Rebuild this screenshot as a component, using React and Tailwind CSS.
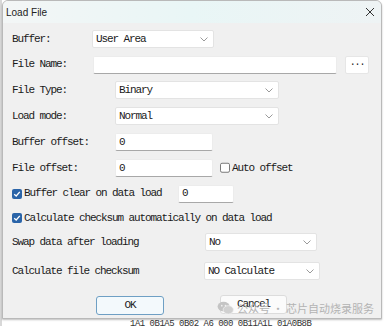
import React from 'react';

const mono = { fontFamily: '"Liberation Mono", "Noto Sans CJK SC", monospace' };

function Chevron() {
	return (
		<svg width="8" height="5" viewBox="0 0 8 5" className="shrink-0">
			<polyline points="0.5,0.5 4,4 7.5,0.5" fill="none" stroke="#9a9a9a" strokeWidth="1" />
		</svg>
	);
}

function Select({ left, width, value }) {
	return (
		<div
			className="absolute top-1/2 -translate-y-1/2 h-[18px] bg-white border border-[#e3e3e3] rounded-[2px] flex items-center justify-between pl-[3px] pr-[5px] text-[11px] tracking-[-1.1px] text-[#1a1a1a]"
			style={{ left, width }}
		>
			<span>{value}</span>
			<Chevron />
		</div>
	);
}

function Input({ left, width, value }) {
	return (
		<div
			className="absolute top-1/2 -translate-y-1/2 h-[18px] bg-white border border-[#ececec] border-b-[#a8a8a8] rounded-[2px] flex items-center pl-[3px] text-[11px] tracking-[-1.1px] text-[#1a1a1a]"
			style={{ left, width }}
		>
			{value}
		</div>
	);
}

function Check({ on }) {
	return on ? (
		<span className="inline-flex w-[10px] h-[10px] rounded-[2px] bg-[#2a64a8] items-center justify-center shrink-0">
			<svg width="8" height="8" viewBox="0 0 8 8">
				<polyline points="1.2,4.2 3.2,6 6.8,1.8" fill="none" stroke="#fff" strokeWidth="1.3" />
			</svg>
		</span>
	) : (
		<span className="inline-block w-[10px] h-[10px] rounded-[2px] border border-[#7a7a7a] bg-white shrink-0" />
	);
}

function Row({ h, children }) {
	return <div className="relative flex items-center pl-[9px]" style={{ height: h }}>{children}</div>;
}

export default function App() {
	return (
		<div className="relative w-[385px] h-[326px] bg-white overflow-hidden" style={mono}>
			{/* background strip at bottom */}
			<div className="absolute left-[130px] top-[319px] text-[9px] leading-[10px] text-[#333] whitespace-nowrap tracking-[-0.5px]">
				1A1 0B1A5 0B02   A6  000 0B11A1L  01A0B8B
			</div>
			<div className="absolute left-0 top-0 w-[2px] h-[326px] bg-[#d8d8d8]" />

			<div className="absolute left-[2px] top-0 w-[380px] h-[319px] border border-[#b9b9b9] rounded-t-[6px] bg-[#f0f0f0] overflow-hidden shadow-[0_1px_2px_rgba(0,0,0,0.25)]">
				{/* title bar */}
				<div className="h-[22px] flex items-center justify-between pl-[3px] pr-[6px] bg-gradient-to-r from-[#f3f6f6] via-[#e9f6f6] to-[#eef3f4]">
					<span className="text-[10px] text-[#222]" style={{ fontFamily: '"Liberation Sans", Arial, sans-serif' }}>Load File</span>
					<svg width="10" height="10" viewBox="0 0 10 10">
						<path d="M1 1 L9 9 M9 1 L1 9" stroke="#333" strokeWidth="1" />
					</svg>
				</div>

				<div className="pt-[3px] text-[11px] tracking-[-1.1px] text-[#1a1a1a]">
					<Row h={26}>
						<span>Buffer:</span>
						<Select left={89} width={122} value="User Area" />
					</Row>
					<Row h={25}>
						<span>File Name:</span>
						<Input left={90} width={244} value="" />
						<div className="absolute left-[342px] top-1/2 -translate-y-1/2 w-[24px] h-[18px] bg-white border border-[#e6e6e6] rounded-[2px] flex items-center justify-center text-[10px] leading-none pb-[3px]">...</div>
					</Row>
					<Row h={26}>
						<span>File Type:</span>
						<Select left={112} width={164} value="Binary" />
					</Row>
					<Row h={26}>
						<span>Load mode:</span>
						<Select left={112} width={164} value="Normal" />
					</Row>
					<Row h={26}>
						<span>Buffer offset:</span>
						<Input left={112} width={98} value="0" />
					</Row>
					<Row h={26}>
						<span>File offset:</span>
						<Input left={112} width={98} value="0" />
						<div className="absolute left-[217px] top-1/2 -translate-y-1/2 flex items-center gap-[2px]">
							<Check on={false} />
							<span>Auto offset</span>
						</div>
					</Row>
					<Row h={25}>
						<div className="flex items-center gap-[2px]">
							<Check on />
							<span>Buffer clear on data load</span>
						</div>
						<Input left={175} width={56} value="0" />
					</Row>
					<Row h={24}>
						<div className="flex items-center gap-[2px]">
							<Check on />
							<span>Calculate checksum automatically on data load</span>
						</div>
					</Row>
					<Row h={24}>
						<span>Swap data after loading</span>
						<Select left={202} width={112} value="No" />
					</Row>
					<div className="h-[4px]" />
					<Row h={26}>
						<span>Calculate file checksum</span>
						<Select left={201} width={116} value="NO Calculate" />
					</Row>
					<div className="relative h-[30px] mt-[8px]">
						<div className="absolute left-[93px] top-[4px] w-[68px] h-[19px] rounded-[3px] border border-[#6e9fc4] bg-[#f3f9fc] flex items-center justify-center">OK</div>
						<div className="absolute left-[217px] top-[3px] w-[67px] h-[19px] rounded-[3px] border border-[#dcdcdc] bg-[#fbfbfb] flex items-center justify-center">Cancel</div>
					</div>
				</div>
			</div>

			{/* watermark */}
			<div className="absolute left-[217px] top-[301px] flex items-center gap-[3px] text-[11px] text-[#b3b3b3]" style={{ fontFamily: '"Noto Sans CJK SC", sans-serif' }}>
				<svg width="17" height="14" viewBox="0 0 18 15">
					<ellipse cx="7" cy="6" rx="6.5" ry="5.2" fill="#c4c4c4" />
					<ellipse cx="12" cy="9.5" rx="5.5" ry="4.5" fill="#d0d0d0" stroke="#f0f0f0" strokeWidth="0.8" />
					<circle cx="5" cy="5" r="0.9" fill="#f0f0f0" />
					<circle cx="9" cy="5" r="0.9" fill="#f0f0f0" />
				</svg>
				<span className="leading-none">公众号 · 芯片自动烧录服务</span>
			</div>
		</div>
	);
}
